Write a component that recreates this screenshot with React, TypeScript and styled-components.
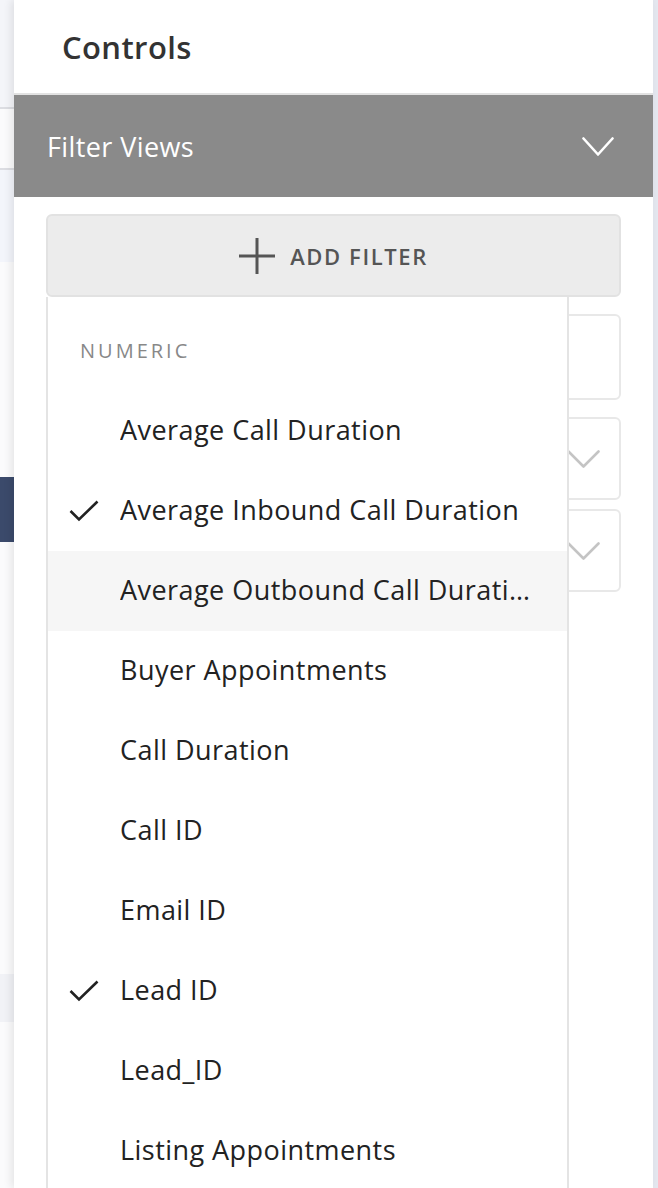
import styled, { createGlobalStyle } from 'styled-components'

const GlobalStyle = createGlobalStyle`
	html, body {
		margin: 0;
		padding: 0;
		height: 1188px;
		overflow: hidden;
		background: #fff;
		font-family: 'Open Sans', 'Liberation Sans', sans-serif;
	}
`

const Page = styled.div`
	display: flex;
	height: 1188px;
	overflow: hidden;
`

const Backdrop = styled.div`
	width: 14px;
	flex-shrink: 0;
	display: flex;
	flex-direction: column;
	background: #fbfbfc;
`

const BackdropBlock = styled.div<{ $h: number; $bg: string; $line?: boolean }>`
	height: ${p => p.$h}px;
	flex-shrink: 0;
	background: ${p => p.$bg};
	border-bottom: ${p => (p.$line ? '2px solid #dcdde2' : 'none')};
`

const Panel = styled.aside`
	flex: 1;
	position: relative;
	z-index: 1;
	display: flex;
	flex-direction: column;
	background: #fff;
	box-shadow: -3px 0 8px rgba(0, 0, 0, 0.09);
`

const Scrollbar = styled.div`
	width: 5px;
	flex-shrink: 0;
	background: #e4e7ef;
`

const Header = styled.header`
	height: 95px;
	flex-shrink: 0;
	display: flex;
	align-items: center;
	padding-left: 48px;
	border-bottom: 2px solid #e2e2e2;
	box-sizing: border-box;
`

const Title = styled.h1`
	margin: 0;
	font-size: 31px;
	font-weight: 600;
	letter-spacing: 0.4px;
	color: #333;
`

const SectionBar = styled.div`
	height: 102px;
	flex-shrink: 0;
	display: flex;
	align-items: center;
	justify-content: space-between;
	padding: 0 39px 0 33px;
	background: #8a8a8a;
	color: #fff;
	font-size: 27px;
	letter-spacing: 0.4px;
`

const Body = styled.div`
	padding: 17px 32px 0;
	display: flex;
	flex-direction: column;
`

const FilterArea = styled.div`
	position: relative;
`

const AddFilterButton = styled.button`
	width: 100%;
	height: 83px;
	display: flex;
	align-items: center;
	justify-content: center;
	gap: 15px;
	background: #ececec;
	border: 2px solid #e2e2e2;
	border-radius: 6px;
	color: #555;
	font-family: 'Open Sans', 'Liberation Sans', sans-serif;
	font-size: 22px;
	font-weight: 600;
	letter-spacing: 1.6px;
	cursor: pointer;
`

const Fields = styled.div`
	display: flex;
	flex-direction: column;
	margin-top: 17px;
`

const Field = styled.div<{ $h: number; $gap: number }>`
	height: ${p => p.$h}px;
	margin-top: ${p => p.$gap}px;
	display: flex;
	align-items: center;
	justify-content: flex-end;
	padding-right: 19px;
	border: 2px solid #e8e8e8;
	border-radius: 6px;
	box-sizing: border-box;
`

const Menu = styled.div`
	position: absolute;
	top: 83px;
	left: 0;
	width: 523px;
	height: 900px;
	background: #fff;
	border-left: 2px solid #e4e4e4;
	border-right: 2px solid #e4e4e4;
	box-sizing: border-box;
`

const GroupLabel = styled.div`
	padding: 42px 0 28px 32px;
	line-height: 24px;
	font-size: 20px;
	color: #888;
	letter-spacing: 3px;
`

const Option = styled.div<{ $active?: boolean }>`
	height: 80px;
	display: flex;
	align-items: center;
	position: relative;
	padding: 0 0 3px 72px;
	box-sizing: border-box;
	background: ${p => (p.$active ? '#f6f6f6' : '#fff')};
	color: #222;
	font-size: 27px;
	letter-spacing: 0.45px;
`

const OptionText = styled.span`
	display: block;
	overflow: hidden;
	text-overflow: ellipsis;
	white-space: nowrap;
	padding-right: 34px;
`

const CheckMark = styled.svg`
	position: absolute;
	left: 21px;
	top: 50%;
	margin-top: -11px;
`

function Chevron({ color, w, h }: { color: string; w: number; h: number }) {
	return (
		<svg width={w} height={h} viewBox={`0 0 ${w} ${h}`} fill='none'>
			<polyline
				points={`1.5,1.5 ${w / 2},${h - 1.5} ${w - 1.5},1.5`}
				stroke={color}
				strokeWidth='2.6'
				strokeLinecap='round'
				strokeLinejoin='round'
			/>
		</svg>
	)
}

function Plus() {
	return (
		<svg width='36' height='36' viewBox='0 0 36 36'>
			<path d='M18 0v36M0 18h36' stroke='#555' strokeWidth='3' />
		</svg>
	)
}

const options = [
	{ label: 'Average Call Duration' },
	{ label: 'Average Inbound Call Duration', checked: true },
	{ label: 'Average Outbound Call Duration', active: true },
	{ label: 'Buyer Appointments' },
	{ label: 'Call Duration' },
	{ label: 'Call ID' },
	{ label: 'Email ID' },
	{ label: 'Lead ID', checked: true },
	{ label: 'Lead_ID' },
	{ label: 'Listing Appointments' },
]

export default function App() {
	return (
		<>
			<GlobalStyle />
			<Page>
				<Backdrop>
					<BackdropBlock $h={107} $bg='#f4f5f9' $line />
					<BackdropBlock $h={59} $bg='#fbfbfc' $line />
					<BackdropBlock $h={92} $bg='#f3f5fb' />
					<BackdropBlock $h={215} $bg='#fbfbfc' />
					<BackdropBlock $h={65} $bg='#3b4a6b' />
					<BackdropBlock $h={432} $bg='#fbfbfc' />
					<BackdropBlock $h={48} $bg='#f1f2f6' />
					<BackdropBlock $h={166} $bg='#fbfbfc' />
					<BackdropBlock $h={4} $bg='#3b4a6b' />
				</Backdrop>
				<Panel>
					<Header>
						<Title>Controls</Title>
					</Header>
					<SectionBar>
						<span>Filter Views</span>
						<Chevron color='#fff' w={32} h={19} />
					</SectionBar>
					<Body>
						<FilterArea>
							<AddFilterButton>
								<Plus />
								ADD FILTER
							</AddFilterButton>
							<Fields>
								<Field $h={86} $gap={0} />
								<Field $h={83} $gap={17}>
									<Chevron color='#c4c4c4' w={33} h={18} />
								</Field>
								<Field $h={83} $gap={9}>
									<Chevron color='#c4c4c4' w={33} h={18} />
								</Field>
							</Fields>
							<Menu>
								<GroupLabel>NUMERIC</GroupLabel>
								{options.map(o => (
									<Option key={o.label} $active={o.active}>
										{o.checked && (
											<CheckMark width='30' height='22' viewBox='0 0 30 22'>
												<polyline
													points='1.5,11 10,19.5 28.5,1.5'
													fill='none'
													stroke='#222'
													strokeWidth='2.6'
												/>
											</CheckMark>
										)}
										<OptionText>{o.label}</OptionText>
									</Option>
								))}
							</Menu>
						</FilterArea>
					</Body>
				</Panel>
				<Scrollbar />
			</Page>
		</>
	)
}
